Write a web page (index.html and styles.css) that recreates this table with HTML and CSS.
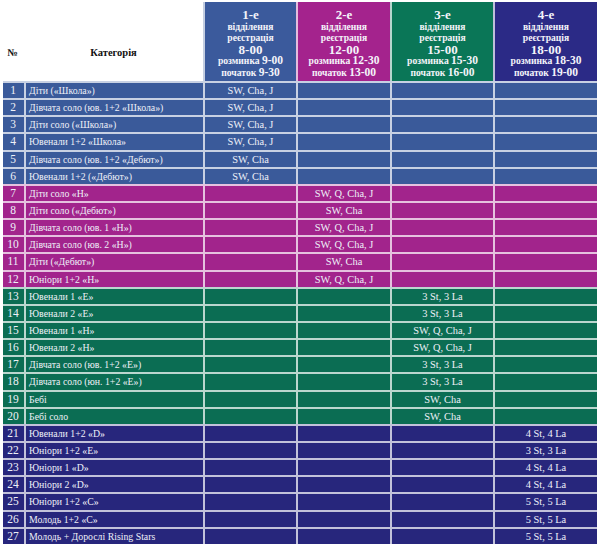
FILE: index.html
```html
<!DOCTYPE html>
<html lang="uk">
<head>
<meta charset="utf-8">
<title>Розклад відділень</title>
<link rel="stylesheet" href="styles.css">
</head>
<body>
<div class="sheet">
  <div class="head">
    <div class="hplain hnum">№</div>
    <div class="hplain hcat">Категорія</div>
    <div class="hsec s-blue">
      <span class="big">1-е</span>
      <span class="sm">відділення</span>
      <span class="sm">реєстрація</span>
      <span class="big">8-00</span>
      <span class="sm">розминка <b class="mid">9-00</b></span>
      <span class="sm">початок <b class="mid">9-30</b></span>
    </div>
    <div class="hsec s-purple">
      <span class="big">2-е</span>
      <span class="sm">відділення</span>
      <span class="sm">реєстрація</span>
      <span class="big">12-00</span>
      <span class="sm">розминка <b class="mid">12-30</b></span>
      <span class="sm">початок <b class="mid">13-00</b></span>
    </div>
    <div class="hsec s-green">
      <span class="big">3-е</span>
      <span class="sm">відділення</span>
      <span class="sm">реєстрація</span>
      <span class="big">15-00</span>
      <span class="sm">розминка <b class="mid">15-30</b></span>
      <span class="sm">початок <b class="mid">16-00</b></span>
    </div>
    <div class="hsec s-navy">
      <span class="big">4-е</span>
      <span class="sm">відділення</span>
      <span class="sm">реєстрація</span>
      <span class="big">18-00</span>
      <span class="sm">розминка <b class="mid">18-30</b></span>
      <span class="sm">початок <b class="mid">19-00</b></span>
    </div>
  </div>

  <div class="row r-blue"><span class="n">1</span><span class="c">Діти («Школа»)</span><span class="v">SW, Cha, J</span><span class="v"></span><span class="v"></span><span class="v"></span></div>
  <div class="row r-blue"><span class="n">2</span><span class="c">Дівчата соло (юв. 1+2 «Школа»)</span><span class="v">SW, Cha, J</span><span class="v"></span><span class="v"></span><span class="v"></span></div>
  <div class="row r-blue"><span class="n">3</span><span class="c">Діти соло («Школа»)</span><span class="v">SW, Cha, J</span><span class="v"></span><span class="v"></span><span class="v"></span></div>
  <div class="row r-blue"><span class="n">4</span><span class="c">Ювенали 1+2 «Школа»</span><span class="v">SW, Cha, J</span><span class="v"></span><span class="v"></span><span class="v"></span></div>
  <div class="row r-blue"><span class="n">5</span><span class="c">Дівчата соло (юв. 1+2 «Дебют»)</span><span class="v">SW, Cha</span><span class="v"></span><span class="v"></span><span class="v"></span></div>
  <div class="row r-blue"><span class="n">6</span><span class="c">Ювенали 1+2 («Дебют»)</span><span class="v">SW, Cha</span><span class="v"></span><span class="v"></span><span class="v"></span></div>

  <div class="row r-purple"><span class="n">7</span><span class="c">Діти соло «Н»</span><span class="v"></span><span class="v">SW, Q, Cha, J</span><span class="v"></span><span class="v"></span></div>
  <div class="row r-purple"><span class="n">8</span><span class="c">Діти соло («Дебют»)</span><span class="v"></span><span class="v">SW, Cha</span><span class="v"></span><span class="v"></span></div>
  <div class="row r-purple"><span class="n">9</span><span class="c">Дівчата соло (юв. 1 «Н»)</span><span class="v"></span><span class="v">SW, Q, Cha, J</span><span class="v"></span><span class="v"></span></div>
  <div class="row r-purple"><span class="n">10</span><span class="c">Дівчата соло (юв. 2 «Н»)</span><span class="v"></span><span class="v">SW, Q, Cha, J</span><span class="v"></span><span class="v"></span></div>
  <div class="row r-purple"><span class="n">11</span><span class="c">Діти («Дебют»)</span><span class="v"></span><span class="v">SW, Cha</span><span class="v"></span><span class="v"></span></div>
  <div class="row r-purple"><span class="n">12</span><span class="c">Юніори 1+2 «Н»</span><span class="v"></span><span class="v">SW, Q, Cha, J</span><span class="v"></span><span class="v"></span></div>

  <div class="row r-green"><span class="n">13</span><span class="c">Ювенали 1 «E»</span><span class="v"></span><span class="v"></span><span class="v">3 St, 3 La</span><span class="v"></span></div>
  <div class="row r-green"><span class="n">14</span><span class="c">Ювенали 2 «E»</span><span class="v"></span><span class="v"></span><span class="v">3 St, 3 La</span><span class="v"></span></div>
  <div class="row r-green"><span class="n">15</span><span class="c">Ювенали 1 «Н»</span><span class="v"></span><span class="v"></span><span class="v">SW, Q, Cha, J</span><span class="v"></span></div>
  <div class="row r-green"><span class="n">16</span><span class="c">Ювенали 2 «Н»</span><span class="v"></span><span class="v"></span><span class="v">SW, Q, Cha, J</span><span class="v"></span></div>
  <div class="row r-green"><span class="n">17</span><span class="c">Дівчата соло (юв. 1+2 «Е»)</span><span class="v"></span><span class="v"></span><span class="v">3 St, 3 La</span><span class="v"></span></div>
  <div class="row r-green"><span class="n">18</span><span class="c">Дівчата соло (юн. 1+2 «Е»)</span><span class="v"></span><span class="v"></span><span class="v">3 St, 3 La</span><span class="v"></span></div>
  <div class="row r-green"><span class="n">19</span><span class="c">Бебі</span><span class="v"></span><span class="v"></span><span class="v">SW, Cha</span><span class="v"></span></div>
  <div class="row r-green"><span class="n">20</span><span class="c">Бебі соло</span><span class="v"></span><span class="v"></span><span class="v">SW, Cha</span><span class="v"></span></div>

  <div class="row r-navy"><span class="n">21</span><span class="c">Ювенали 1+2 «D»</span><span class="v"></span><span class="v"></span><span class="v"></span><span class="v">4 St, 4 La</span></div>
  <div class="row r-navy"><span class="n">22</span><span class="c">Юніори 1+2 «E»</span><span class="v"></span><span class="v"></span><span class="v"></span><span class="v">3 St, 3 La</span></div>
  <div class="row r-navy"><span class="n">23</span><span class="c">Юніори 1 «D»</span><span class="v"></span><span class="v"></span><span class="v"></span><span class="v">4 St, 4 La</span></div>
  <div class="row r-navy"><span class="n">24</span><span class="c">Юніори 2 «D»</span><span class="v"></span><span class="v"></span><span class="v"></span><span class="v">4 St, 4 La</span></div>
  <div class="row r-navy"><span class="n">25</span><span class="c">Юніори 1+2 «C»</span><span class="v"></span><span class="v"></span><span class="v"></span><span class="v">5 St, 5 La</span></div>
  <div class="row r-navy"><span class="n">26</span><span class="c">Молодь 1+2 «C»</span><span class="v"></span><span class="v"></span><span class="v"></span><span class="v">5 St, 5 La</span></div>
  <div class="row r-navy"><span class="n">27</span><span class="c">Молодь + Дорослі Rising Stars</span><span class="v"></span><span class="v"></span><span class="v"></span><span class="v">5 St, 5 La</span></div>
</div>
</body>
</html>
```

FILE: styles.css
```css
html, body {
  margin: 0;
  padding: 0;
  background: #ffffff;
}

body {
  font-family: "Liberation Serif", "DejaVu Serif", serif;
  color: #eef0f8;
}

.sheet {
  width: 594px;
  padding: 2px 3px 0 3px;
}

.head,
.row {
  display: grid;
  grid-template-columns: 21px 179px 93px 94px 103px 104px;
}

.head {
  height: 79px;
}

.hplain {
  display: flex;
  align-items: flex-end;
  justify-content: center;
  padding-bottom: 22px;
  color: #111111;
  font-weight: bold;
  font-size: 10.5px;
  line-height: 12px;
}

.hnum {
  padding-right: 2px;
}

.hsec {
  display: flex;
  flex-direction: column;
  align-items: center;
  padding-top: 7px;
  box-sizing: border-box;
  border-left: 2px solid rgba(255, 255, 255, 0.7);
  color: #f4f4fa;
  font-weight: bold;
  line-height: 11.6px;
}

.hsec .big {
  font-size: 13px;
}

.hsec .sm {
  font-size: 9.6px;
}

.hsec .mid {
  font-size: 11.5px;
}

.s-blue { background: #3b5a9c; }
.s-purple { background: #a4238d; }
.s-green { background: #0a7657; }
.s-navy { background: #2b2a86; }

.row {
  height: 17.15px;
  box-sizing: border-box;
  border-top: 2px solid rgba(255, 255, 255, 0.72);
  line-height: 15px;
}

.r-blue { background: #3a5a9a; }
.r-purple { background: #a2248c; }
.r-green { background: #0b6d53; }
.r-navy { background: #27267c; }

.row > span {
  display: block;
  overflow: hidden;
  white-space: nowrap;
  box-sizing: border-box;
}

.row .n {
  text-align: center;
  font-size: 11.5px;
  padding-right: 1px;
}

.row .c,
.row .v {
  border-left: 2px solid rgba(255, 255, 255, 0.72);
}

.row .c {
  padding-left: 3px;
  font-size: 9.8px;
}

.row .v {
  text-align: center;
  font-size: 10.4px;
}
```
